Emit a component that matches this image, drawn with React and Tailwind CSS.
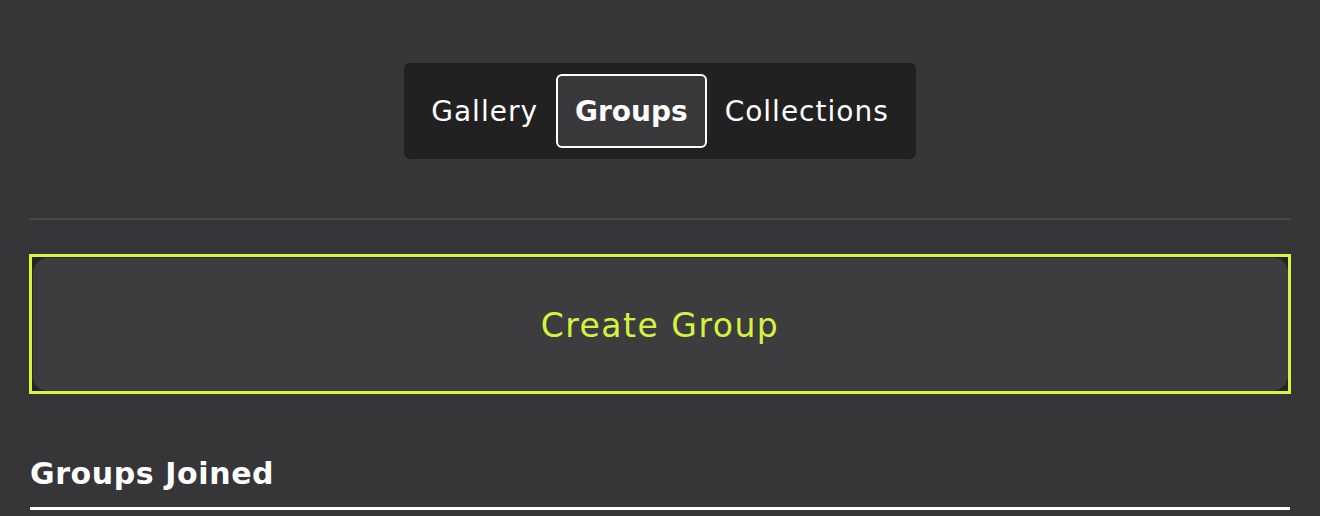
import { useState } from "react";

const tabs = ["Gallery", "Groups", "Collections"];

const App = () => {
  const [active, setActive] = useState("Groups");

  return (
    <div
      className="min-h-screen bg-[#363638] px-[30px] text-white"
      style={{ fontFamily: '"DejaVu Sans", "Noto Sans", sans-serif' }}
    >
      {/* tab switcher */}
      <div className="flex justify-center pt-[63px]">
        <div className="flex items-center rounded-md bg-[#212121] px-[9px] py-[11px]">
          {tabs.map((tab) => (
            <button
              key={tab}
              onClick={() => setActive(tab)}
              className={
                active === tab
                  ? "h-[74px] rounded-md border-2 border-white bg-[#38383a] px-[17px] pt-[2px] text-[28px] font-bold"
                  : "h-[74px] rounded-md border-2 border-transparent px-[16px] pt-[2px] text-[28px] tracking-[1px]"
              }
            >
              {tab}
            </button>
          ))}
        </div>
      </div>

      <div className="mt-[59px] h-[2px] bg-[#4a4a4c]" />

      {/* create group button with focus outline */}
      <div className="-mx-px mt-[34px] border-[3px] border-[#d6f53f] bg-[#242424]">
        <button className="flex h-[134px] w-full items-center justify-center rounded-2xl bg-[#3d3d3f] pt-[3px] text-[33px] tracking-[1.5px] text-[#d6f240] shadow-[inset_1px_1px_0_#2a2a2a]">
          Create Group
        </button>
      </div>

      <h2 className="mt-[60px] text-[30px] font-bold leading-[40px] tracking-[0.6px]">
        Groups Joined
      </h2>
      <div className="mt-[13px] h-[3px] bg-white" />
    </div>
  );
};

export default App;
